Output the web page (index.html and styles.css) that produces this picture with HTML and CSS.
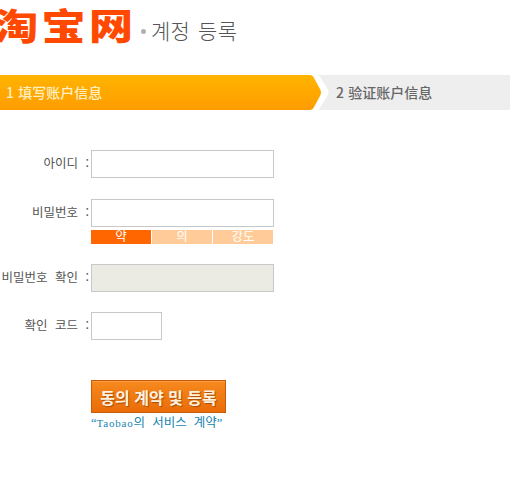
FILE: index.html
```html
<!DOCTYPE html>
<html lang="ko">
<head>
    <meta charset="UTF-8">
    <title>계정 등록</title>
    <link rel="stylesheet" href="styles.css">
</head>
<body>
    <div class="header">
        <div class="logo" lang="zh-CN">淘宝网</div>
        <span class="dot"></span>
        <h1>계정 등록</h1>
    </div>
    <div class="steps" lang="zh-CN">
        <div class="step current">1 填写账户信息</div>
        <svg class="arrow" width="22" height="35" viewBox="0 0 22 35">
            <defs>
                <linearGradient id="orange" x1="0" y1="0" x2="0" y2="1">
                    <stop offset="0" stop-color="#ffb400"/>
                    <stop offset="1" stop-color="#ff9c00"/>
                </linearGradient>
            </defs>
            <path d="M0 0H9Q11 0 12.500 2.500L19.500 14Q21.500 17.500 19.500 21L10.500 35H0Z" fill="#fff"/>
            <path d="M0 0H2Q4 0 5.500 2L12 14Q14 17.500 12 21L5.500 33Q4 35 2 35H0Z" fill="url(#orange)"/>
        </svg>
        <div class="step next">2 验证账户信息</div>
    </div>
    <form class="form">
        <div class="row">
            <label for="userid">아이디 :</label>
            <input type="text" id="userid">
        </div>
        <div class="row password">
            <label for="pass">비밀번호 :</label>
            <input type="password" id="pass">
        </div>
        <div class="strength">
            <span class="on">약</span>
            <span>의</span>
            <span>강도</span>
        </div>
        <div class="row">
            <label for="pass2">비밀번호 확인 :</label>
            <input type="password" id="pass2" disabled>
        </div>
        <div class="row">
            <label for="code">확인 코드 :</label>
            <input type="text" id="code" class="short">
        </div>
        <div class="submit">
            <button type="button">동의 계약 및 등록</button>
            <a href="#">“<span class="latin">Taobao</span>의 서비스 계약”</a>
        </div>
    </form>
</body>
</html>
```

FILE: styles.css
```css
*{
    box-sizing: border-box;
    padding: 0;
    margin: 0;
}
body{
    width: 510px;
    height: 495px;
    overflow: hidden;
    background-color: white;
    font-family: "Noto Sans CJK KR", sans-serif;
    font-size: 12px;
    color: #555;
}
.header{
    display: flex;
    height: 75px;
}
.logo{
    width: 136px;
    height: 50px;
    margin-left: -6px;
    font: 900 38px/50px "Noto Sans CJK SC", sans-serif;
    letter-spacing: 3px;
    color: #ff4800;
    white-space: nowrap;
    transform: scale(1.16, 0.96);
    transform-origin: 0 50%;
}
.dot{
    width: 5px;
    height: 5px;
    margin: 29px 5px 0 11px;
    border-radius: 50%;
    background-color: #b0b0b0;
}
h1{
    margin-top: 15px;
    font-size: 21px;
    font-weight: 300;
    line-height: 30px;
    letter-spacing: 0.2px;
    word-spacing: 2px;
    color: #555;
    white-space: nowrap;
}
.steps{
    display: flex;
    height: 35px;
    font: 500 14px/35px "Noto Sans CJK SC", sans-serif;
    word-spacing: 1px;
    background-color: #eee;
}
.step.current{
    width: 308px;
    padding-left: 6px;
    color: #fff0c4;
    background: linear-gradient(#ffb400, #ff9c00);
}
.step.next{
    padding-left: 6px;
    color: #666;
}
.form{
    padding-top: 40px;
}
.row{
    display: flex;
    height: 28px;
    margin-bottom: 20px;
}
.row:first-child{
    margin-bottom: 21px;
}
.row.password{
    margin-bottom: 3px;
}
label{
    width: 91px;
    padding-right: 2px;
    font-size: 12.5px;
    line-height: 26px;
    text-align: right;
    word-spacing: 4px;
    white-space: nowrap;
}
input{
    width: 183px;
    height: 28px;
    border: 1px solid #c8c8c8;
    background-color: white;
}
input:disabled{
    background-color: #ebebe4;
}
input.short{
    width: 71px;
}
.strength{
    display: grid;
    grid-template-columns: 60px 60px 60px;
    gap: 1px;
    height: 14px;
    margin: 0 0 20px 91px;
    font-size: 12.5px;
    line-height: 12px;
    text-align: center;
    color: white;
}
.strength span{
    height: 14px;
    background-color: #ffcc99;
}
.strength .on{
    background-color: #ff6600;
}
.submit{
    display: flex;
    flex-direction: column;
    align-items: flex-start;
    margin: 40px 0 0 91px;
}
button{
    width: 135px;
    height: 33px;
    border: 1px solid #c85a08;
    background: linear-gradient(#f68a1e, #e96c08);
    box-shadow: inset 0 1px 0 #fa9c40;
    color: #fff3df;
    font: 700 16px/30px "Noto Sans CJK KR", sans-serif;
    text-shadow: 1px 1px 1px #a54c08;
    white-space: nowrap;
}
a{
    margin-top: 2px;
    font-family: "Liberation Serif", "Noto Sans CJK KR", serif;
    font-size: 12.5px;
    line-height: 16px;
    word-spacing: 4px;
    color: #1683b0;
    text-decoration: none;
    white-space: nowrap;
}
.latin{
    font-size: 11px;
    letter-spacing: 0.8px;
}
```
